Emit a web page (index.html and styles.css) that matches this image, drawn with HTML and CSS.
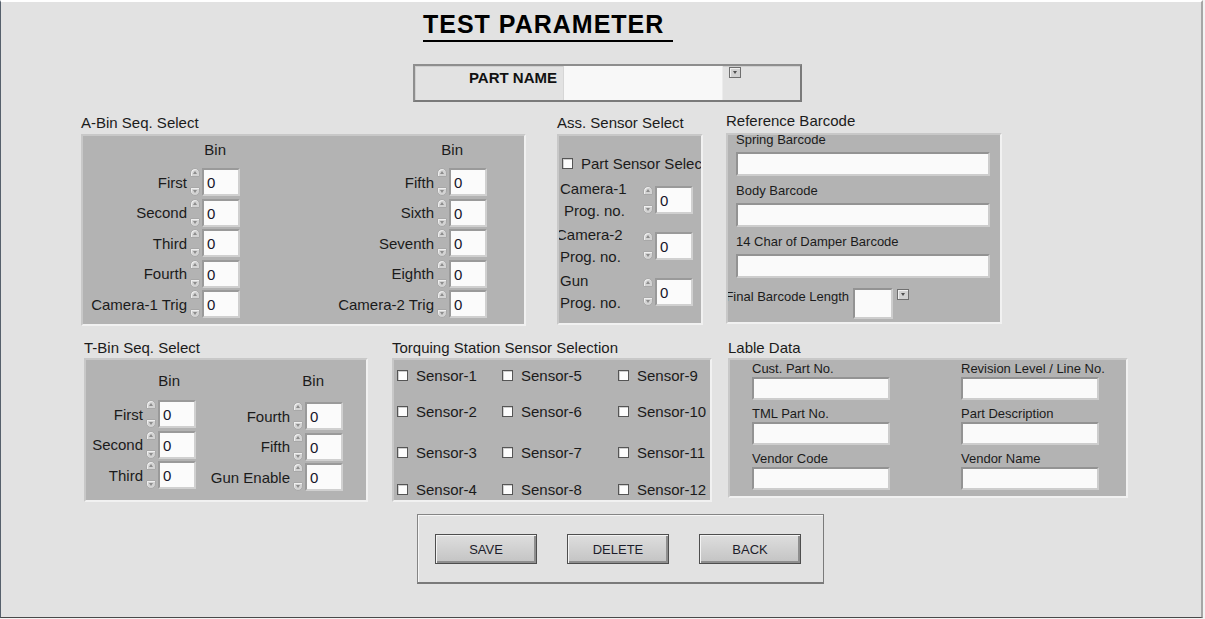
FILE: index.html
```html
<!DOCTYPE html>
<html>
<head>
<meta charset="utf-8">
<title>Test Parameter</title>
<link rel="stylesheet" href="styles.css">
</head>
<body>
<div class="page">
  <header class="head">
    <h1 class="title">TEST PARAMETER</h1>
    <div class="partname">
      <div class="pn-label">PART NAME</div>
      <div class="pn-input"></div>
      <span class="ddbtn"></span>
    </div>
  </header>

  <section class="row row1">
    <div class="group g-abin">
      <div class="glabel">A-Bin Seq. Select</div>
      <div class="panel p-abin">
        <div class="col ab-l">
          <div class="binhead">Bin</div>
          <div class="num"><span class="nlabel">First</span><span class="spin"><i></i><i></i></span><span class="nbox">0</span></div>
          <div class="num"><span class="nlabel">Second</span><span class="spin"><i></i><i></i></span><span class="nbox">0</span></div>
          <div class="num"><span class="nlabel">Third</span><span class="spin"><i></i><i></i></span><span class="nbox">0</span></div>
          <div class="num"><span class="nlabel">Fourth</span><span class="spin"><i></i><i></i></span><span class="nbox">0</span></div>
          <div class="num"><span class="nlabel">Camera-1 Trig</span><span class="spin"><i></i><i></i></span><span class="nbox">0</span></div>
        </div>
        <div class="col ab-r">
          <div class="binhead">Bin</div>
          <div class="num"><span class="nlabel">Fifth</span><span class="spin"><i></i><i></i></span><span class="nbox">0</span></div>
          <div class="num"><span class="nlabel">Sixth</span><span class="spin"><i></i><i></i></span><span class="nbox">0</span></div>
          <div class="num"><span class="nlabel">Seventh</span><span class="spin"><i></i><i></i></span><span class="nbox">0</span></div>
          <div class="num"><span class="nlabel">Eighth</span><span class="spin"><i></i><i></i></span><span class="nbox">0</span></div>
          <div class="num"><span class="nlabel">Camera-2 Trig</span><span class="spin"><i></i><i></i></span><span class="nbox">0</span></div>
        </div>
      </div>
    </div>

    <div class="group g-ass">
      <div class="glabel">Ass. Sensor Select</div>
      <div class="panel p-ass">
        <div class="chkrow"><span class="chk"></span><span class="chktext">Part Sensor Select</span></div>
        <div class="agrp">
          <div class="alabel"><div class="l1">Camera-1</div><div class="l2 indent">Prog. no.</div></div>
          <span class="spin"><i></i><i></i></span><span class="nbox">0</span>
        </div>
        <div class="agrp">
          <div class="alabel"><div class="l1 outdent">Camera-2</div><div class="l2">Prog. no.</div></div>
          <span class="spin"><i></i><i></i></span><span class="nbox">0</span>
        </div>
        <div class="agrp">
          <div class="alabel"><div class="l1">Gun</div><div class="l2">Prog. no.</div></div>
          <span class="spin"><i></i><i></i></span><span class="nbox">0</span>
        </div>
      </div>
    </div>

    <div class="group g-ref">
      <div class="glabel glabel-up">Reference Barcode</div>
      <div class="panel p-ref">
        <div class="field first"><div class="flabel">Spring Barcode</div><div class="tbox wide"></div></div>
        <div class="field"><div class="flabel">Body Barcode</div><div class="tbox wide"></div></div>
        <div class="field"><div class="flabel">14 Char of Damper Barcode</div><div class="tbox wide"></div></div>
        <div class="finalrow">
          <div class="finallabel">Final Barcode Length</div>
          <div class="tbox lenbox"></div>
          <span class="ddbtn"></span>
        </div>
      </div>
    </div>
  </section>

  <section class="row row2">
    <div class="group g-tbin">
      <div class="glabel">T-Bin Seq. Select</div>
      <div class="panel p-tbin">
        <div class="col tb-l">
          <div class="binhead">Bin</div>
          <div class="num"><span class="nlabel">First</span><span class="spin"><i></i><i></i></span><span class="nbox">0</span></div>
          <div class="num"><span class="nlabel">Second</span><span class="spin"><i></i><i></i></span><span class="nbox">0</span></div>
          <div class="num"><span class="nlabel">Third</span><span class="spin"><i></i><i></i></span><span class="nbox">0</span></div>
        </div>
        <div class="col tb-r">
          <div class="binhead">Bin</div>
          <div class="num"><span class="nlabel">Fourth</span><span class="spin"><i></i><i></i></span><span class="nbox">0</span></div>
          <div class="num"><span class="nlabel">Fifth</span><span class="spin"><i></i><i></i></span><span class="nbox">0</span></div>
          <div class="num"><span class="nlabel">Gun Enable</span><span class="spin"><i></i><i></i></span><span class="nbox">0</span></div>
        </div>
      </div>
    </div>

    <div class="group g-torq">
      <div class="glabel">Torquing Station Sensor Selection</div>
      <div class="panel p-torq">
        <div class="sens"><span class="chk"></span>Sensor-1</div>
        <div class="sens"><span class="chk"></span>Sensor-5</div>
        <div class="sens"><span class="chk"></span>Sensor-9</div>
        <div class="sens"><span class="chk"></span>Sensor-2</div>
        <div class="sens"><span class="chk"></span>Sensor-6</div>
        <div class="sens"><span class="chk"></span>Sensor-10</div>
        <div class="sens"><span class="chk"></span>Sensor-3</div>
        <div class="sens"><span class="chk"></span>Sensor-7</div>
        <div class="sens"><span class="chk"></span>Sensor-11</div>
        <div class="sens"><span class="chk"></span>Sensor-4</div>
        <div class="sens"><span class="chk"></span>Sensor-8</div>
        <div class="sens"><span class="chk"></span>Sensor-12</div>
      </div>
    </div>

    <div class="group g-lable">
      <div class="glabel">Lable Data</div>
      <div class="panel p-lable">
        <div class="lfield"><div class="flabel">Cust. Part No.</div><div class="tbox lbox"></div></div>
        <div class="lfield"><div class="flabel">Revision Level / Line No.</div><div class="tbox lbox"></div></div>
        <div class="lfield"><div class="flabel">TML Part No.</div><div class="tbox lbox"></div></div>
        <div class="lfield"><div class="flabel">Part Description</div><div class="tbox lbox"></div></div>
        <div class="lfield"><div class="flabel">Vendor Code</div><div class="tbox lbox"></div></div>
        <div class="lfield"><div class="flabel">Vendor Name</div><div class="tbox lbox"></div></div>
      </div>
    </div>
  </section>

  <section class="actions">
    <button class="btn">SAVE</button>
    <button class="btn">DELETE</button>
    <button class="btn">BACK</button>
  </section>
</div>
</body>
</html>
```

FILE: styles.css
```css
* { box-sizing: border-box; margin: 0; padding: 0; }
html, body { background: #f3f3f3; }
body {
  font-family: "Liberation Sans", Arial, sans-serif;
  font-size: 15px;
  color: #1b1b1b;
}

.page {
  width: 1203px;
  height: 618px;
  background: #e2e2e2;
  border-top: 2px solid #ffffff;
  border-left: 1px solid #56606c;
  border-right: 2px solid #a6a6a6;
  border-bottom: 1px solid #4a4a4a;
  overflow: hidden;
}

/* ---------- header ---------- */
.head {
  display: flex;
  flex-direction: column;
  align-items: flex-start;
  padding-top: 9px;
}
.title {
  margin-left: 422px;
  font-size: 25px;
  font-weight: 700;
  line-height: 26px;
  letter-spacing: 1px;
  color: #000;
  padding-right: 9px;
  padding-bottom: 3px;
  border-bottom: 2px solid #000;
}
.partname {
  margin-left: 412px;
  margin-top: 22px;
  width: 389px;
  height: 38px;
  display: flex;
  align-items: flex-start;
  border: 2px solid;
  border-color: #8e8e8e #7a7a7a #7a7a7a #8e8e8e;
  box-shadow: inset 1px 1px 0 #cfcfcf;
}
.pn-label {
  width: 148px;
  padding-right: 6px;
  padding-top: 2px;
  text-align: right;
  font-weight: 700;
  line-height: 20px;
  color: #111;
}
.pn-input {
  width: 160px;
  height: 100%;
  background: #f8f8f8;
  border-left: 1px solid #d6d6d6;
  border-right: 1px solid #ececec;
}
.ddbtn {
  position: relative;
  width: 12px;
  height: 11px;
  margin-left: 6px;
  margin-top: 1px;
  background: #d2d2d2;
  border: 1px solid #6f6f6f;
  box-shadow: inset 1px 1px 0 #f0f0f0;
  flex: none;
}
.ddbtn::after {
  content: "";
  position: absolute;
  left: 3px;
  top: 3px;
  border-left: 2px solid transparent;
  border-right: 2px solid transparent;
  border-top: 3px solid #505050;
}

/* ---------- rows ---------- */
.row { display: flex; align-items: flex-start; }
.row1 { margin-top: 11px; padding-left: 80px; }
.row2 { margin-top: 12px; padding-left: 83px; }
.row1 .panel { margin-top: 1px; }

.glabel {
  line-height: 20px;
  font-size: 15px;
  white-space: nowrap;
  color: #1b1b1b;
}
.glabel-up { margin-top: -2px; margin-bottom: 2px; }

.panel {
  background: #b3b3b3;
  border: 2px solid;
  border-color: #c8c8c8 #f1f1f1 #f1f1f1 #c8c8c8;
  overflow: hidden;
}

.g-abin { width: 445px; }
.g-ass { width: 146px; margin-left: 31px; }
.g-ref { width: 276px; margin-left: 23px; }
.g-tbin { width: 284px; }
.g-torq { width: 320px; margin-left: 24px; }
.g-lable { width: 400px; margin-left: 16px; }

.p-abin { height: 192px; display: flex; padding-top: 4px; gap: 44px; }
.p-ass { height: 191px; }
.p-ref { height: 191px; padding-left: 8px; }
.p-tbin { height: 144px; display: flex; padding-top: 11px; gap: 9px; }
.p-torq {
  height: 144px;
  display: grid;
  grid-template-columns: 105px 116px 1fr;
  grid-template-rows: 36px 41px 37px 20px;
  padding: 5px 0 0 3px;
}
.p-lable {
  height: 140px;
  display: grid;
  grid-template-columns: 138px 138px;
  column-gap: 71px;
  row-gap: 5px;
  align-content: start;
  padding-left: 22px;
}

/* ---------- numeric controls ---------- */
.col { display: flex; flex-direction: column; }
.ab-l { width: 157px; }
.ab-r { width: 203px; }
.tb-l { width: 110px; }
.tb-r { width: 138px; }

.binhead { line-height: 20px; text-align: right; margin-bottom: 7px; }
.ab-l .binhead { padding-right: 14px; }
.ab-r .binhead { padding-right: 24px; }
.tb-l .binhead { padding-right: 16px; margin-bottom: 8px; }
.tb-r .binhead { padding-right: 19px; margin-bottom: 10px; }

.num { display: flex; align-items: center; height: 30.5px; }
.nlabel {
  flex: 1;
  text-align: right;
  padding-right: 3px;
  white-space: nowrap;
}
.spin {
  width: 11px;
  height: 28px;
  margin-right: 1px;
  display: flex;
  flex-direction: column;
  justify-content: space-between;
  flex: none;
}
.spin i {
  position: relative;
  display: block;
  width: 10px;
  height: 9px;
  background: #d3d3d3;
  border: 1px solid #a8a8a8;
  border-radius: 5px 5px 1px 1px;
  box-shadow: inset 1px 1px 0 #efefef;
}
.spin i + i { border-radius: 1px 1px 5px 5px; }
.spin i::after {
  content: "";
  position: absolute;
  left: 2px;
  top: 2px;
  border-left: 2px solid transparent;
  border-right: 2px solid transparent;
  border-bottom: 3px solid #8c8c8c;
}
.spin i + i::after {
  top: 2px;
  border-bottom: 0;
  border-top: 3px solid #8c8c8c;
}
.nbox {
  width: 38px;
  height: 28px;
  flex: none;
  background: #fbfbfb;
  border: 2px solid;
  border-color: #9a9a9a #d0d0d0 #d0d0d0 #9a9a9a;
  padding-left: 3px;
  line-height: 25px;
  font-size: 15px;
  color: #15152a;
}

/* ---------- Ass. sensor ---------- */
.chkrow {
  display: flex;
  align-items: center;
  height: 20px;
  margin-top: 17px;
  padding-left: 3px;
  white-space: nowrap;
}
.chk {
  display: inline-block;
  width: 11px;
  height: 11px;
  flex: none;
  background: #fdfdfd;
  border: 1px solid #555;
  box-shadow: inset 1px 1px 0 #cfcfcf;
  margin-right: 8px;
}
.agrp {
  display: flex;
  align-items: center;
  height: 44px;
  margin-top: 2px;
}
.chkrow + .agrp { margin-top: 5px; }
.alabel {
  width: 84px;
  line-height: 22px;
  padding-left: 1px;
  white-space: nowrap;
}
.alabel .indent { padding-left: 4px; }
.alabel .outdent { text-indent: -4px; }

/* ---------- reference barcode ---------- */
.field { margin-top: 6px; }
.field.first { margin-top: -4px; }
.flabel {
  font-size: 13px;
  line-height: 18px;
  white-space: nowrap;
  color: #1b1b1b;
}
.field .flabel { margin-bottom: 3px; }
.tbox {
  background: #fafafa;
  border: 2px solid;
  border-color: #939393 #cdcdcd #cdcdcd #939393;
}
.wide { width: 254px; height: 24px; }
.finalrow {
  display: flex;
  align-items: flex-start;
  margin-top: 10px;
  margin-left: -12px;
}
.finallabel {
  width: 125px;
  flex: none;
  text-align: right;
  font-size: 13px;
  line-height: 17px;
  white-space: nowrap;
  margin-right: 4px;
}
.lenbox { width: 40px; height: 31px; flex: none; }
.finalrow .ddbtn { margin-left: 4px; margin-top: 1px; }

/* ---------- torquing ---------- */
.sens {
  display: flex;
  align-items: center;
  height: 20px;
  white-space: nowrap;
}

/* ---------- lable data ---------- */
.lfield .flabel { line-height: 17px; }
.lbox { width: 138px; height: 23px; }

/* ---------- actions ---------- */
.actions {
  margin-top: 12px;
  margin-left: 416px;
  width: 407px;
  height: 70px;
  display: flex;
  align-items: flex-start;
  gap: 30px;
  padding: 19px 0 0 17px;
  border: 1px solid #858585;
  border-right-color: #7a7a7a;
  border-bottom: 2px solid #7a7a7a;
  box-shadow: inset 1px 1px 0 #f6f6f6;
}
.btn {
  width: 102px;
  height: 30px;
  font-family: "Liberation Sans", Arial, sans-serif;
  font-size: 13px;
  color: #1c1c2a;
  background: linear-gradient(#dedede, #c3c3c3);
  border: 1px solid #4e4e4e;
  box-shadow: inset 1px 1px 0 #f4f4f4, inset -2px -2px 0 #8e8e8e;
  cursor: default;
}
```
